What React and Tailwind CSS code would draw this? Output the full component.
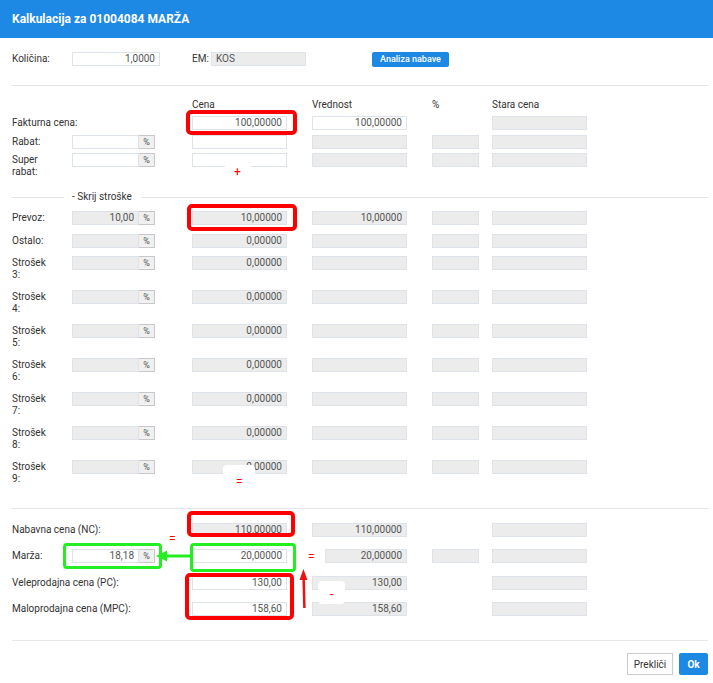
import React from "react";

const gray = "bg-[#ececec]";
const white = "bg-white";

function Field({ v = "", tone = "gray", w = "w-[95px]", left = false }) {
  return (
    <div
      className={`h-[14px] border border-[#dde3e9] text-[10px] leading-[12px] text-[#555] px-[4px] whitespace-nowrap overflow-hidden ${
        tone === "gray" ? gray : white
      } ${w} ${left ? "text-left" : "text-right"}`}
    >
      {v}
    </div>
  );
}

function PctInput({ v = "", tone = "gray" }) {
  return (
    <div className="flex">
      <Field v={v} tone={tone} w="w-[67px]" />
      <div className="h-[14px] w-[16px] border border-l-0 border-[#c8c8c8] bg-[#f0f0f0] text-[9px] leading-[12px] text-[#555] text-center">
        %
      </div>
    </div>
  );
}

function Row({ label, h, pct, cena, vred, narrow, pctCol, stara = true }) {
  return (
    <div className={`flex items-start ${h}`}>
      <div className="w-[60px] mt-[1px] text-[10px] leading-[12px] text-[#333] whitespace-nowrap">{label}</div>
      <div className="w-[83px]">{pct && <PctInput v={pct.v} tone={pct.tone} />}</div>
      <div className="ml-[37px] w-[95px]">{cena && <Field v={cena.v} tone={cena.tone} />}</div>
      <div className="ml-[25px] w-[95px] flex justify-end">
        {vred && <Field v={vred.v} tone={vred.tone} w={narrow ? "w-[82px]" : "w-[95px]"} />}
      </div>
      <div className="ml-[25px] w-[47px]">{pctCol && <Field w="w-[47px]" />}</div>
      <div className="ml-[13px] w-[95px]">{stara && <Field />}</div>
    </div>
  );
}

const costs = ["3", "4", "5", "6", "7", "8", "9"];

export default function App() {
  return (
    <div className="relative w-[713px] h-[683px] overflow-hidden bg-white font-['Roboto',sans-serif]">
      <div className="h-[38px] bg-[#1e88e5] flex items-center px-[12px]">
        <span className="text-white text-[12px] font-bold">Kalkulacija za 01004084 MARŽA</span>
      </div>

      <div className="pt-[14px] pl-[12px] pr-[5px]">
        <div className="flex items-start h-[14px]">
          <div className="w-[60px] text-[10px] leading-[14px] text-[#333]">Količina:</div>
          <Field v="1,0000" tone="white" w="w-[88px]" />
          <div className="ml-[32px] w-[19px] text-[10px] leading-[14px] text-[#333]">EM:</div>
          <Field v="KOS" left w="w-[95px]" />
          <button className="ml-[66px] h-[15px] w-[77px] rounded-[2px] bg-[#1e88e5] text-white text-[9px] font-medium leading-[15px]">
            Analiza nabave
          </button>
        </div>

        <div className="mt-[19px] h-px bg-[#e6e6e6]" />

        <div className="mt-[13px] h-[12px] flex text-[10px] leading-[12px] text-[#333]">
          <div className="w-[180px]" />
          <div className="w-[120px]">Cena</div>
          <div className="w-[120px]">Vrednost</div>
          <div className="w-[60px]">%</div>
          <div>Stara cena</div>
        </div>

        <div className="mt-[5px]">
          <Row label="Fakturna cena:" h="h-[19px]" cena={{ v: "100,00000", tone: "white" }} vred={{ v: "100,00000", tone: "white" }} />
          <Row label="Rabat:" h="h-[18px]" pct={{ tone: "white" }} cena={{ tone: "white" }} vred={{}} pctCol />
          <Row
            label={<>Super<br />rabat:</>}
            h="h-[38px]"
            pct={{ tone: "white" }}
            cena={{ tone: "white" }}
            vred={{}}
            pctCol
          />
        </div>

        <div className="h-[12px] flex items-center">
          <div className="w-[52px] h-px bg-[#e6e6e6]" />
          <div className="ml-[8px] text-[10px] leading-[12px] text-[#333]">- Skrij stroške</div>
          <div className="ml-[9px] flex-1 h-px bg-[#e6e6e6]" />
        </div>

        <div className="mt-[8px]">
          <Row label="Prevoz:" h="h-[23px]" pct={{ v: "10,00" }} cena={{ v: "10,00000" }} vred={{ v: "10,00000" }} pctCol />
          <Row label="Ostalo:" h="h-[22px]" pct={{}} cena={{ v: "0,00000" }} vred={{}} pctCol />
          {costs.map((n) => (
            <Row
              key={n}
              label={<>Strošek<br />{n}:</>}
              h="h-[34px]"
              pct={{}}
              cena={{ v: "0,00000" }}
              vred={{}}
              pctCol
            />
          ))}
        </div>

        <div className="mt-[14px] h-px bg-[#e6e6e6]" />

        <div className="mt-[14px]">
          <Row label="Nabavna cena (NC):" h="h-[26px]" cena={{ v: "110,00000" }} vred={{ v: "110,00000" }} />
          <Row label="Marža:" h="h-[27px]" pct={{ v: "18,18", tone: "white" }} cena={{ v: "20,00000", tone: "white" }} vred={{ v: "20,00000" }} narrow pctCol />
          <Row label="Veleprodajna cena (PC):" h="h-[26px]" cena={{ v: "130,00", tone: "white" }} vred={{ v: "130,00" }} />
          <Row label="Maloprodajna cena (MPC):" h="h-[14px]" cena={{ v: "158,60", tone: "white" }} vred={{ v: "158,60" }} />
        </div>

        <div className="mt-[24px] h-px bg-[#e6e6e6]" />

        <div className="mt-[12px] flex justify-end gap-[6px]">
          <button className="h-[22px] w-[46px] border border-[#cccccc] bg-white text-[10px] text-[#333]">Prekliči</button>
          <button className="h-[22px] w-[29px] rounded-[2px] bg-[#1e88e5] text-[10px] font-bold text-white">Ok</button>
        </div>
      </div>

      {/* annotations drawn over the form */}
      <div className="absolute inset-0 pointer-events-none">
        <div className="absolute left-[186px] top-[110px] w-[111px] h-[25px] border-[4px] border-[#ff0000] rounded-[5px]" />
        <div className="absolute left-[225px] top-[155px] w-[26px] h-[25px] bg-white rounded-[4px]" />
        <div className="absolute left-[234px] top-[165px] text-[12px] leading-[14px] text-[#ff0000]">+</div>

        <div className="absolute left-[187px] top-[204px] w-[110px] h-[27px] border-[4px] border-[#ff0000] rounded-[5px]" />

        <div className="absolute left-[223px] top-[465px] w-[32px] h-[24px] bg-white rounded-[4px]" />
        <div className="absolute left-[236px] top-[475px] text-[12px] leading-[14px] text-[#ff0000]">=</div>

        <div className="absolute left-[187px] top-[511px] w-[108px] h-[26px] border-[4px] border-[#ff0000] rounded-[5px]" />
        <div className="absolute left-[169px] top-[532px] text-[12px] leading-[14px] text-[#ff0000]">=</div>

        <div className="absolute left-[63px] top-[543px] w-[99px] h-[26px] border-[3px] border-[#22ee22] rounded-[4px]" />
        <div className="absolute left-[190px] top-[543px] w-[106px] h-[29px] border-[3px] border-[#22ee22] rounded-[4px]" />
        <svg className="absolute left-[155px] top-[549px]" width="36" height="14" viewBox="0 0 36 14">
          <line x1="9" y1="7" x2="36" y2="7" stroke="#22ee22" strokeWidth="3" />
          <polygon points="1,7 12,1.5 12,12.5" fill="#22ee22" />
        </svg>
        <div className="absolute left-[308px] top-[550px] text-[12px] leading-[14px] text-[#ff0000]">=</div>

        <div className="absolute left-[185px] top-[573px] w-[109px] h-[47px] border-[4px] border-[#ff0000] rounded-[5px]" />
        <svg className="absolute left-[298px] top-[568px]" width="12" height="42" viewBox="0 0 12 42">
          <line x1="6.4" y1="40" x2="5.6" y2="9" stroke="#ee1111" strokeWidth="2.5" />
          <polygon points="5.4,1 9.5,12 1.5,12" fill="#ee1111" />
        </svg>
        <div className="absolute left-[318px] top-[581px] w-[27px] h-[23px] bg-white rounded-[4px]" />
        <div className="absolute left-[330px] top-[587px] text-[12px] leading-[14px] text-[#ff0000]">-</div>
      </div>
    </div>
  );
}
